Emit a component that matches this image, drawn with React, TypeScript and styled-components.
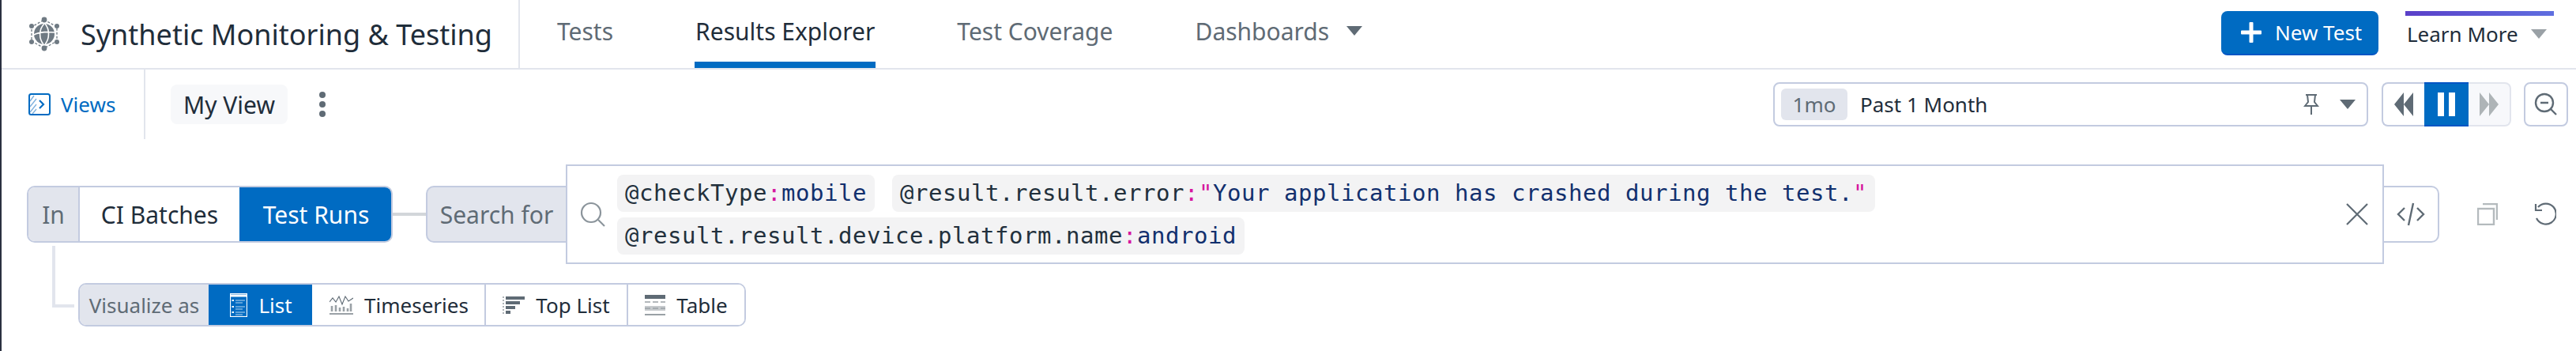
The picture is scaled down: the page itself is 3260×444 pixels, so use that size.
import React from "react";
import styled, { createGlobalStyle } from "styled-components";

const GlobalStyle = createGlobalStyle`
  * {
    margin: 0;
    padding: 0;
    box-sizing: border-box;
  }
  body {
    background: #fff;
    font-family: "Noto Sans", "Open Sans", sans-serif;
    color: #1f2d3a;
  }
`;

const BLUE = "#006bc2";
const BLUE_EDGE = "#0055c4";
const LINE = "#c3cbe0";
const SOFT = "#e2e5ed";
const GRAY = "#5f6b75";

const Page = styled.div`
  width: 3260px;
  height: 444px;
  border-left: 2px solid #2a3040;
  overflow: hidden;
`;

/* top bar */
const TopBar = styled.header`
  display: flex;
  align-items: stretch;
  height: 88px;
  border-bottom: 2px solid ${SOFT};
`;

const Brand = styled.div`
  display: flex;
  align-items: center;
  gap: 26px;
  width: 656px;
  padding-left: 34px;
  border-right: 2px solid ${SOFT};
`;

const Title = styled.h1`
  font-size: 36px;
  font-weight: 400;
  white-space: nowrap;
  color: #1f2d3a;
`;

const Tabs = styled.nav`
  display: flex;
  gap: 102px;
  padding-left: 46px;
`;

const Tab = styled.a<{ $active?: boolean }>`
  display: flex;
  align-items: center;
  gap: 22px;
  height: 86px;
  padding: 0 1px;
  font-size: 30px;
  white-space: nowrap;
  color: ${(p) => (p.$active ? "#1f2d3a" : GRAY)};
  border-bottom: 8px solid ${(p) => (p.$active ? BLUE : "transparent")};
`;

const Caret = styled.span<{ $color?: string }>`
  display: inline-block;
  width: 0;
  height: 0;
  border-left: 10px solid transparent;
  border-right: 10px solid transparent;
  border-top: 12px solid ${(p) => p.$color || GRAY};
`;

const TopActions = styled.div`
  display: flex;
  align-items: flex-start;
  gap: 34px;
  margin-left: auto;
  padding: 14px 28px 0 0;
`;

const NewTest = styled.button`
  display: flex;
  align-items: center;
  gap: 16px;
  width: 199px;
  height: 56px;
  padding-left: 24px;
  font: 400 26px "Noto Sans", sans-serif;
  color: #fff;
  background: ${BLUE};
  border: none;
  border-bottom: 2px solid ${BLUE_EDGE};
  border-radius: 8px;
`;

const LearnMore = styled.div`
  display: flex;
  align-items: center;
  gap: 16px;
  width: 188px;
  height: 52px;
  padding-left: 2px;
  font-size: 26px;
  white-space: nowrap;
  border-top: 6px solid transparent;
  border-image: linear-gradient(90deg, #5a3fc8, #5f6fe0) 1;
`;

/* views bar */
const ViewsBar = styled.div`
  display: flex;
  align-items: stretch;
  height: 88px;
`;

const ViewsCell = styled.div`
  display: flex;
  align-items: center;
  gap: 13px;
  width: 182px;
  padding-left: 34px;
  font-size: 26px;
  color: ${BLUE};
  border-right: 2px solid ${SOFT};
`;

const ViewName = styled.div`
  align-self: center;
  display: flex;
  align-items: center;
  justify-content: center;
  width: 148px;
  height: 50px;
  margin-left: 32px;
  font-size: 30px;
  background: #f7f8fa;
  border-radius: 8px;
`;

const Kebab = styled.div`
  align-self: center;
  display: flex;
  flex-direction: column;
  gap: 4px;
  margin-left: 40px;
`;

const Dot = styled.span`
  width: 8px;
  height: 8px;
  border-radius: 50%;
  background: ${GRAY};
`;

const TimeTools = styled.div`
  display: flex;
  align-items: center;
  margin-left: auto;
  padding-right: 10px;
`;

const TimePicker = styled.div`
  display: flex;
  align-items: center;
  width: 753px;
  height: 56px;
  padding: 0 14px 0 8px;
  font-size: 26px;
  border: 2px solid ${LINE};
  border-radius: 8px;
`;

const Duration = styled.span`
  display: flex;
  align-items: center;
  justify-content: center;
  width: 84px;
  height: 40px;
  margin-right: 16px;
  color: ${GRAY};
  background: ${SOFT};
  border-radius: 6px;
`;

const PinSlot = styled.span`
  display: flex;
  margin-left: auto;
  margin-right: 26px;
`;

const Playback = styled.div`
  display: flex;
  height: 56px;
  margin-left: 17px;
`;

const PlayButton = styled.div<{ $tone?: "on" | "off" }>`
  display: flex;
  align-items: center;
  justify-content: center;
  width: ${(p) => (p.$tone === "on" ? "56px" : "54px")};
  background: ${(p) => (p.$tone === "on" ? BLUE : p.$tone === "off" ? "#f7f8fb" : "#fff")};
  border: 2px solid ${(p) => (p.$tone === "on" ? BLUE_EDGE : p.$tone === "off" ? SOFT : LINE)};
  border-width: ${(p) => (p.$tone === "on" ? "2px 0" : "2px")};
  border-left-width: ${(p) => (p.$tone ? "0" : "2px")};
  border-right-width: ${(p) => (p.$tone === "off" ? "2px" : "0")};
  border-radius: ${(p) =>
    p.$tone === "on" ? "0" : p.$tone === "off" ? "0 8px 8px 0" : "8px 0 0 8px"};
`;

const ZoomButton = styled.div`
  display: flex;
  align-items: center;
  justify-content: center;
  width: 56px;
  height: 56px;
  margin-left: 16px;
  border: 2px solid ${LINE};
  border-radius: 8px;
`;

/* query */
const QueryRow = styled.div`
  display: flex;
  align-items: center;
  height: 126px;
  margin-top: 32px;
  padding-left: 32px;
`;

const Segmented = styled.div<{ $height: number }>`
  display: flex;
  height: ${(p) => p.$height}px;
  border: 2px solid ${LINE};
  border-radius: 10px;
  overflow: hidden;
  font-size: ${(p) => (p.$height > 60 ? 30 : 26)}px;
  white-space: nowrap;
`;

const SegLabel = styled.span<{ $width: number }>`
  display: flex;
  align-items: center;
  justify-content: center;
  width: ${(p) => p.$width}px;
  color: ${GRAY};
  background: ${SOFT};
`;

const Seg = styled.span<{ $width: number; $on?: boolean; $split?: boolean }>`
  display: flex;
  align-items: center;
  justify-content: center;
  gap: 14px;
  width: ${(p) => p.$width}px;
  color: ${(p) => (p.$on ? "#fff" : "#1f2d3a")};
  background: ${(p) => (p.$on ? BLUE : "#fff")};
  border-left: 2px solid ${(p) => (p.$split ? LINE : "transparent")};
`;

const Connector = styled.span`
  width: 42px;
  height: 4px;
  background: #d2d6da;
`;

const SearchLabel = styled.div`
  display: flex;
  align-items: center;
  justify-content: center;
  width: 177px;
  height: 72px;
  font-size: 30px;
  color: ${GRAY};
  background: ${SOFT};
  border: 2px solid ${LINE};
  border-right: none;
  border-radius: 10px 0 0 10px;
`;

const SearchBox = styled.div`
  display: flex;
  align-items: center;
  width: 2301px;
  height: 126px;
  padding: 0 18px 0 16px;
  border: 2px solid ${LINE};
`;

const Chips = styled.div`
  display: flex;
  flex-wrap: wrap;
  gap: 7px 22px;
  width: 1700px;
  margin-left: 15px;
`;

const Chip = styled.span`
  display: inline-block;
  height: 47px;
  padding: 0 10px;
  font: 400 29px/46px "DejaVu Sans Mono", "Liberation Mono", monospace;
  letter-spacing: 0.54px;
  white-space: pre;
  color: #22303c;
  background: #f3f3f4;
  border-radius: 8px;
`;

const Colon = styled.span`
  color: #d6189e;
`;

const Value = styled.span`
  color: #12306e;
`;

const ClearSlot = styled.span`
  display: flex;
  margin-left: auto;
`;

const CodeButton = styled.div`
  display: flex;
  align-items: center;
  justify-content: center;
  width: 70px;
  height: 72px;
  border: 2px solid ${LINE};
  border-left: none;
  border-radius: 0 10px 10px 0;
`;

const QueryTools = styled.div`
  display: flex;
  align-items: center;
  gap: 46px;
  margin-left: 48px;
`;

/* visualize */
const VisualizeRow = styled.div`
  display: flex;
  align-items: flex-start;
  margin-top: 24px;
  padding-left: 64px;
`;

const Elbow = styled.span`
  width: 28px;
  height: 78px;
  margin-top: -47px;
  margin-right: 5px;
  border-left: 4px solid ${SOFT};
  border-bottom: 4px solid ${SOFT};
`;

const Logo = () => (
  <svg width="40" height="44" viewBox="0 0 40 44" fill="none">
    <path d="M20 4 36 13V31L20 40 4 31V13Z" stroke="#6f7a83" strokeWidth="1.3" strokeDasharray="3 2" />
    <g fill="#6f7a83">
      <circle cx="20" cy="4" r="3.4" />
      <circle cx="36" cy="12" r="3" />
      <circle cx="36" cy="32" r="3" />
      <circle cx="20" cy="40" r="3.4" />
      <circle cx="4" cy="32" r="3" />
      <circle cx="4" cy="12" r="3" />
      <circle cx="20" cy="22" r="13" />
    </g>
    <path d="M7 23C14 19 26 19 33 20M20 9C13 16 13 28 19 35M21 9C27 16 27 28 21 35" stroke="#fff" strokeWidth="1.6" />
  </svg>
);

const ViewsIcon = () => (
  <svg width="28" height="28" viewBox="0 0 28 28" fill="none">
    <path d="M2 24 10 14M2 17 10 7M2 10 7 3M5 26 10 20" stroke="#7fb2de" strokeWidth="1.4" />
    <rect x="1" y="1" width="26" height="26" rx="2.5" stroke={BLUE} strokeWidth="2" />
    <path d="M14 9 19 14 14 19" stroke={BLUE} strokeWidth="2.2" />
  </svg>
);

const Plus = () => (
  <svg width="28" height="28" viewBox="0 0 28 28" fill="#fff">
    <rect x="11.5" y="1" width="5" height="26" rx="1" />
    <rect x="1" y="11.5" width="26" height="5" rx="1" />
  </svg>
);

const PinIcon = () => (
  <svg width="20" height="26" viewBox="0 0 20 26" fill="none" stroke={GRAY} strokeWidth="2">
    <path d="M3 1H17M5 1 6 10 2 15H18L14 10 15 1M10 15V26" />
  </svg>
);

const Rewind = ({ flip, color }: { flip?: boolean; color: string }) => (
  <svg width="24" height="30" viewBox="0 0 24 30" fill={color} transform={flip ? "scale(-1 1)" : undefined}>
    <path d="M12 0V30L0 15ZM24 0V30L12 15Z" />
  </svg>
);

const PauseIcon = () => (
  <svg width="22" height="30" viewBox="0 0 22 30" fill="#fff">
    <rect width="8" height="30" />
    <rect x="14" width="8" height="30" />
  </svg>
);

const ZoomOutIcon = () => (
  <svg width="30" height="30" viewBox="0 0 30 30" fill="none" stroke={GRAY} strokeWidth="2.4">
    <circle cx="13" cy="13" r="11" />
    <path d="M8 13H18M21 21 28 28" />
  </svg>
);

const SearchIcon = () => (
  <svg width="32" height="32" viewBox="0 0 32 32" fill="none" stroke="#8b949b" strokeWidth="2.2">
    <circle cx="14" cy="14" r="12" />
    <path d="M23 23 31 31" />
  </svg>
);

const CloseIcon = () => (
  <svg width="28" height="28" viewBox="0 0 28 28" stroke={GRAY} strokeWidth="2.2">
    <path d="M1 1 27 27M27 1 1 27" />
  </svg>
);

const CodeIcon = () => (
  <svg width="36" height="30" viewBox="0 0 36 30" fill="none" stroke={GRAY} strokeWidth="2.4">
    <path d="M10 7 2 15 10 23M26 7 34 15 26 23M21 1 15 29" />
  </svg>
);

const CopyIcon = () => (
  <svg width="26" height="28" viewBox="0 0 26 28" fill="none" stroke="#b4babd" strokeWidth="2.4">
    <rect x="1" y="7" width="20" height="20" />
    <path d="M7 1H25V21" />
  </svg>
);

const UndoIcon = () => (
  <svg width="28" height="30" viewBox="0 0 28 30" fill="none" stroke={GRAY} strokeWidth="2.2">
    <path d="M5 6A13 13 0 1 1 3 20M2 2V10H10" />
  </svg>
);

const ListIcon = () => (
  <svg width="22" height="30" viewBox="0 0 22 30" fill="none" stroke="#fff">
    <rect x="0.5" y="0.5" width="21" height="29" strokeWidth="1.2" />
    <path d="M0 3H22" strokeWidth="3" />
    <path d="M7 9H19M7 12H16M7 17H19M7 20H16M7 24H19M7 27H16" strokeWidth="1.2" stroke="#bcd8f0" />
    <path d="M2.5 9H5M2.5 17H5M2.5 24H5" strokeWidth="2" />
  </svg>
);

const SeriesIcon = () => (
  <svg width="30" height="24" viewBox="0 0 30 24" fill="none" stroke={GRAY}>
    <path d="M0 8 4 3 8 8 12 1 16 11 20 1 24 7 30 3" strokeWidth="1.1" />
    <path d="M3 20V13M8 20V12M13 20V15M18 20V14M23 20V16M27 20V10" strokeWidth="2.6" stroke="#9aa1a6" />
    <path d="M0 23H30" strokeWidth="2" stroke="#9aa1a6" />
  </svg>
);

const TopListIcon = () => (
  <svg width="28" height="22" viewBox="0 0 28 22" fill="none">
    <path d="M1 0V22" stroke="#9aa1a6" strokeWidth="1.6" strokeDasharray="2 2" />
    <g fill={GRAY}>
      <rect x="4" y="0" width="24" height="4" />
      <rect x="4" y="6" width="18" height="4" />
      <rect x="4" y="12" width="12" height="4" />
      <rect x="4" y="18" width="6" height="4" />
    </g>
  </svg>
);

const TableIcon = () => (
  <svg width="26" height="26" viewBox="0 0 26 26">
    <rect width="26" height="5" fill={GRAY} />
    <rect y="14" width="26" height="6" fill="#c6cacd" />
    <path d="M0 9H26M0 17H26" stroke="#9aa1a6" strokeWidth="1.4" strokeDasharray="7 3" />
    <rect y="24" width="26" height="2" fill="#9aa1a6" />
  </svg>
);

const App = () => {
  return (
    <>
      <GlobalStyle />
      <Page>
        <TopBar>
          <Brand>
            <Logo />
            <Title>Synthetic Monitoring &amp; Testing</Title>
          </Brand>
          <Tabs>
            <Tab>Tests</Tab>
            <Tab $active>Results Explorer</Tab>
            <Tab>Test Coverage</Tab>
            <Tab>
              Dashboards
              <Caret />
            </Tab>
          </Tabs>
          <TopActions>
            <NewTest>
              <Plus />
              New Test
            </NewTest>
            <LearnMore>
              Learn More
              <Caret $color="#9aa1a6" />
            </LearnMore>
          </TopActions>
        </TopBar>

        <ViewsBar>
          <ViewsCell>
            <ViewsIcon />
            Views
          </ViewsCell>
          <ViewName>My View</ViewName>
          <Kebab>
            <Dot />
            <Dot />
            <Dot />
          </Kebab>
          <TimeTools>
            <TimePicker>
              <Duration>1mo</Duration>
              Past 1 Month
              <PinSlot>
                <PinIcon />
              </PinSlot>
              <Caret />
            </TimePicker>
            <Playback>
              <PlayButton>
                <Rewind color={GRAY} />
              </PlayButton>
              <PlayButton $tone="on">
                <PauseIcon />
              </PlayButton>
              <PlayButton $tone="off">
                <Rewind flip color="#aeb4b7" />
              </PlayButton>
            </Playback>
            <ZoomButton>
              <ZoomOutIcon />
            </ZoomButton>
          </TimeTools>
        </ViewsBar>

        <QueryRow>
          <Segmented $height={72}>
            <SegLabel $width={63}>In</SegLabel>
            <Seg $width={204} $split>
              CI Batches
            </Seg>
            <Seg $width={192} $on>
              Test Runs
            </Seg>
          </Segmented>
          <Connector />
          <SearchLabel>Search for</SearchLabel>
          <SearchBox>
            <SearchIcon />
            <Chips>
              <Chip>
                @checkType<Colon>:</Colon>
                <Value>mobile</Value>
              </Chip>
              <Chip>
                @result.result.error<Colon>:&quot;</Colon>
                <Value>Your application has crashed during the test.</Value>
                <Colon>&quot;</Colon>
              </Chip>
              <Chip>
                @result.result.device.platform.name<Colon>:</Colon>
                <Value>android</Value>
              </Chip>
            </Chips>
            <ClearSlot>
              <CloseIcon />
            </ClearSlot>
          </SearchBox>
          <CodeButton>
            <CodeIcon />
          </CodeButton>
          <QueryTools>
            <CopyIcon />
            <UndoIcon />
          </QueryTools>
        </QueryRow>

        <VisualizeRow>
          <Elbow />
          <Segmented $height={55}>
            <SegLabel $width={163}>Visualize as</SegLabel>
            <Seg $width={131} $on>
              <ListIcon />
              List
            </Seg>
            <Seg $width={218}>
              <SeriesIcon />
              Timeseries
            </Seg>
            <Seg $width={180} $split>
              <TopListIcon />
              Top List
            </Seg>
            <Seg $width={149} $split>
              <TableIcon />
              Table
            </Seg>
          </Segmented>
        </VisualizeRow>
      </Page>
    </>
  );
};

export default App;
